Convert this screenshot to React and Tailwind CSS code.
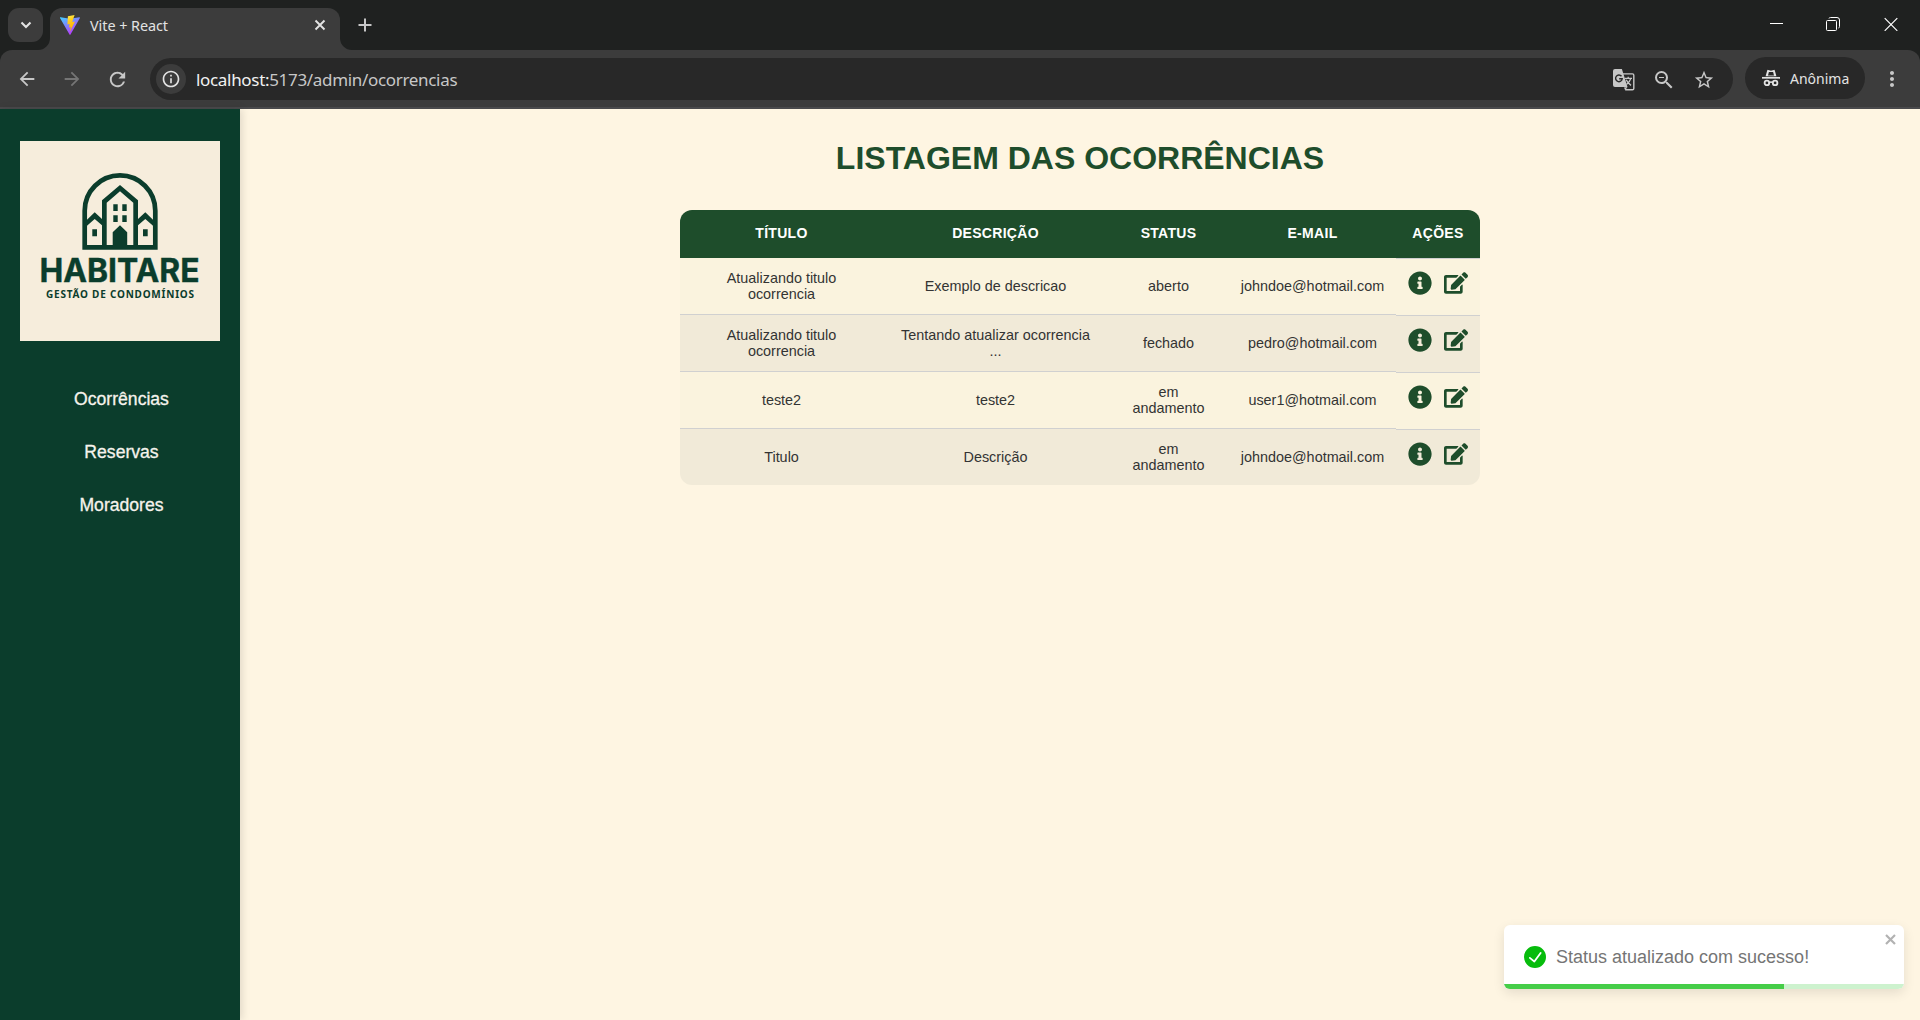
import React from "react";
import { FaEdit, FaInfoCircle } from "react-icons/fa";
import {
  MdArrowBack,
  MdArrowForward,
  MdRefresh,
  MdInfoOutline,
  MdZoomOut,
  MdStarBorder,
  MdMoreVert,
} from "react-icons/md";

const rows = [
  { titulo: ["Atualizando titulo", "ocorrencia"], descricao: ["Exemplo de descricao"], status: ["aberto"], email: "johndoe@hotmail.com" },
  { titulo: ["Atualizando titulo", "ocorrencia"], descricao: ["Tentando atualizar ocorrencia", "..."], status: ["fechado"], email: "pedro@hotmail.com" },
  { titulo: ["teste2"], descricao: ["teste2"], status: ["em", "andamento"], email: "user1@hotmail.com" },
  { titulo: ["Titulo"], descricao: ["Descrição"], status: ["em", "andamento"], email: "johndoe@hotmail.com" },
];

function ViteIcon() {
  return (
    <svg className="h-5 w-5 shrink-0" viewBox="0 0 20 20">
      <defs>
        <linearGradient id="vite-v" x1="0" y1="0" x2="0.6" y2="1">
          <stop offset="0" stopColor="#41d1ff" />
          <stop offset="1" stopColor="#bd34fe" />
        </linearGradient>
        <linearGradient id="vite-bolt" x1="0.4" y1="0" x2="0.6" y2="1">
          <stop offset="0" stopColor="#ffea45" />
          <stop offset="0.3" stopColor="#ffcb1c" />
          <stop offset="1" stopColor="#ffa800" />
        </linearGradient>
      </defs>
      <path d="M19.9 3 10.5 19.6a.6.6 0 0 1-1 0L0 3a.6.6 0 0 1 .6-.8l9.4 1.6 9.3-1.6a.6.6 0 0 1 .6.8Z" fill="url(#vite-v)" />
      <path d="M14.600 0 7.900 1.300 7.400 9.500 9.600 9 9 12.600l1.800-.5-1 4.900 5.200-10.500-2.800.5L14.600 0Z" fill="url(#vite-bolt)" />
    </svg>
  );
}

function IncognitoIcon() {
  return (
    <svg className="h-[18px] w-[18px]" viewBox="0 0 18 18" fill="none" stroke="#e3e3e3">
      <path d="M3.600 7.200 5.200 1.500q.2-.8 1-.6l2.800.8 2.800-.8q.8-.2 1 .6l1.600 5.700Z" fill="#e3e3e3" stroke="none" />
      <path d="M6 6.500 6.900 3h4.200l.9 3.500Z" fill="#282828" stroke="none" />
      <path d="M0 8.800h18" strokeWidth="1.700" />
      <circle cx="4.900" cy="13.900" r="2.300" strokeWidth="1.800" />
      <circle cx="13.100" cy="13.900" r="2.300" strokeWidth="1.800" />
      <path d="M7 13.600q2-1.200 4 0" strokeWidth="1.600" />
    </svg>
  );
}

function TranslateIcon() {
  return (
    <svg className="h-[22px] w-[22px]" viewBox="0 0 22 22" fill="none">
      <path d="M10 4.900h9.500q1.300 0 1.300 1.300v13.200q0 1.300-1.300 1.300h-7.300" stroke="#c7c7c7" strokeWidth="1.400" />
      <path d="M2 0h6.900l5.600 18H2q-2 0-2-2V2q0-2 2-2Z" fill="#c7c7c7" />
      <path d="m11 18.500 3.500-.5-2.300 3.200Z" fill="#c7c7c7" />
      <path d="M8.500 7.300A3.300 3.300 0 1 0 9.200 9.700H6.200" stroke="#282828" strokeWidth="1.400" />
      <path d="M11.700 9.300h7.300M15.200 7.800v1.500M17.800 9.300q-1 3.700-4.300 6.200M13.200 10.700q1.300 3.200 4.800 5.700" stroke="#c7c7c7" strokeWidth="1.300" />
    </svg>
  );
}

function TabStrip() {
  return (
    <div className="flex h-[50px] bg-[#1f2120]">
      <div className="mt-2 ml-2 flex h-[34px] w-[35px] items-center justify-center rounded-[11px] bg-[#3c3c3c]">
        <svg className="h-3 w-3" viewBox="0 0 12 12" fill="none" stroke="#e3e3e3" strokeWidth="2.100">
          <path d="m1.500 3.500 4.500 4.500 4.500-4.500" />
        </svg>
      </div>
      <svg className="mt-[38px] -ml-[5px] h-3 w-3" viewBox="0 0 12 12">
        <path d="M12 0v12H0A12 12 0 0 0 12 0Z" fill="#3c3c3c" />
      </svg>
      <div className="mt-2 flex h-[42px] w-[290px] items-start rounded-t-xl bg-[#3c3c3c] pt-[7px] pl-[10px]">
        <ViteIcon />
        <span className="ml-[10px] w-[214px] pt-px font-['Noto_Sans'] text-[14.400px] leading-5 tracking-[-0.05px] text-[#e3e3e3]">Vite + React</span>
        <svg className="mt-1 ml-[10px] h-3 w-3" viewBox="0 0 12 12" stroke="#e3e3e3" strokeWidth="1.900">
          <path d="m1.500 1.500 9 9m0-9-9 9" />
        </svg>
      </div>
      <svg className="mt-[38px] h-3 w-3" viewBox="0 0 12 12">
        <path d="M0 0v12h12A12 12 0 0 1 0 0Z" fill="#3c3c3c" />
      </svg>
      <svg className="mt-[18px] ml-[6px] h-[14px] w-[14px]" viewBox="0 0 14 14" stroke="#c7c7c7" strokeWidth="2">
        <path d="M.500 7h13M7 .500v13" />
      </svg>
      <div className="mt-[17px] mr-[22px] ml-auto flex h-[14px] items-start">
        <div className="mt-[6px] h-px w-[13px] bg-white" />
        <svg className="ml-[43px] h-[14px] w-[14px]" viewBox="0 0 14 14" fill="none" stroke="#fff">
          <rect x="0.500" y="3.500" width="10" height="10" rx="1" />
          <path d="M3 1.500q.2-1 1.500-1H11a2.500 2.500 0 0 1 2.500 2.500v6.500q0 1.300-1 1.500" />
        </svg>
        <svg className="ml-[44px] h-[14px] w-[14px]" viewBox="0 0 14 14" stroke="#fff" strokeWidth="1.200">
          <path d="m.700 1.200 12.600 12.600m0-12.600L.700 13.800" />
        </svg>
      </div>
    </div>
  );
}

function Toolbar() {
  return (
    <div className="bg-[#1f2120]">
      <div className="flex h-[59px] items-start rounded-t-xl border-b-2 border-[#4a4a4c] bg-[#3c3c3c] pt-2 font-['Noto_Sans']">
        <div className="mt-[10px] ml-[16px] flex text-[#c7c7c7]">
          <MdArrowBack size={22} />
          <MdArrowForward size={22} className="ml-[23px] text-[#757575]" />
          <MdRefresh size={23} className="ml-[23px]" />
        </div>
        <div className="ml-[21px] flex h-[42px] w-[1583px] items-center rounded-full bg-[#282828] pl-[6px]">
          <div className="flex h-[30px] w-[30px] items-center justify-center rounded-full bg-[#3c3c3c]">
            <MdInfoOutline size={20} color="#e3e3e3" />
          </div>
          <div className="ml-[10px] pt-px text-[17px] leading-6 tracking-[-0.32px] whitespace-nowrap text-[#c7c7c7]">
            <span className="text-[#f1f1f1]">localhost:</span>5173/admin/ocorrencias
          </div>
          <div className="mr-[18px] ml-auto flex items-center pt-px text-[#c7c7c7]">
            <TranslateIcon />
            <MdZoomOut size={24} className="ml-[17px]" />
            <MdStarBorder size={22} className="ml-[17px]" />
          </div>
        </div>
        <div className="-mt-px ml-3 flex h-[42px] w-[120px] items-center rounded-full bg-[#282828] pl-[17px]">
          <IncognitoIcon />
          <span className="ml-[10px] text-[14px] text-[#e3e3e3]">Anônima</span>
        </div>
        <MdMoreVert size={24} color="#c7c7c7" className="mt-[9px] ml-[15px]" />
      </div>
    </div>
  );
}

function Logo() {
  return (
    <svg className="h-[200px] w-[200px] bg-[#f6eddc]" viewBox="0 0 200 200" fill="#0b3d2c">
      <path d="M64.700 106.400V69.700a35.300 35.300 0 0 1 70.600 0v36.700Z" fill="none" stroke="#0b3d2c" strokeWidth="4.700" />
      <path d="M82 104.500V59.300L100 44l18 15.300v45.200h-4.700V61.700L100 50.300 86.700 61.700v42.800Z" />
      <path d="m67 78.700 7.700-7.400L82 78v6.300L74.700 78 67 84.700ZM133 78.700l-7.700-7.400L118 78v6.300l7.300-6.300 7.700 6.700Z" />
      <path d="M93.300 63.300h4.400V70h-4.400ZM102.300 63.300h4.400V70h-4.400ZM93.300 74.300h4.400V81h-4.400ZM102.300 74.300h4.400V81h-4.400ZM72.300 88.300H77v7h-4.700ZM123 88.300h4.700v7H123ZM92.700 106V91.300l7.300-7 7.200 7V106Z" />
      <text x="19.500" y="140.800" fontFamily="Inter, sans-serif" fontWeight="700" fontSize="32" stroke="#0b3d2c" strokeWidth="0.400" textLength="160" lengthAdjust="spacingAndGlyphs">HABITARE</text>
      <text x="26" y="156.800" fontFamily="'Noto Sans', sans-serif" fontWeight="700" fontSize="10" textLength="148" lengthAdjust="spacing">GESTÃO DE CONDOMÍNIOS</text>
    </svg>
  );
}

function Sidebar() {
  return (
    <aside className="relative w-60 shrink-0 bg-[#0b3d2c] px-5 pt-8 shadow-[2px_0_8px_rgba(0,0,0,0.12)]">
      <Logo />
      <nav className="mt-[48px] flex flex-col items-center gap-[33px] pl-[3px] text-[17.600px] leading-5 text-[#f6f3ec] antialiased [-webkit-text-stroke:0.300px_#f6f3ec]">
        <a>Ocorrências</a>
        <a>Reservas</a>
        <a>Moradores</a>
      </nav>
    </aside>
  );
}

function Lines({ lines }) {
  return (
    <div className="flex flex-col items-center justify-center border-b border-[#d0d0d0] pb-px group-last:border-b-0 group-last:pb-0">
      {lines.map((line) => (
        <span key={line}>{line}</span>
      ))}
    </div>
  );
}

function Table() {
  return (
    <div className="mx-auto w-[800px] overflow-hidden rounded-xl text-[14.400px] leading-4 text-[#333]">
      <div className="grid h-12 grid-cols-[203px_225px_121px_167px_84px] items-center bg-[#1e4d2b] pb-[3px] text-center text-[14px] font-bold tracking-[0.300px] text-white">
        {["TÍTULO", "DESCRIÇÃO", "STATUS", "E-MAIL", "AÇÕES"].map((h) => (
          <div key={h}>{h}</div>
        ))}
      </div>
      {rows.map((row, i) => (
        <div
          key={i}
          className="group grid h-[57px] grid-cols-[203px_225px_121px_167px_84px] odd:bg-[#f1ead8] even:bg-[#faf3de] last:h-14"
        >
          <Lines lines={row.titulo} />
          <Lines lines={row.descricao} />
          <Lines lines={row.status} />
          <Lines lines={[row.email]} />
          <div className="flex items-start gap-3 border-t border-[#d0d0d0] pt-3 pl-3 text-[#1e4d2b]">
            <FaInfoCircle size={24} />
            <FaEdit size={24} />
          </div>
        </div>
      ))}
    </div>
  );
}

function Toast() {
  return (
    <div className="absolute right-4 bottom-[31px] flex h-16 w-[400px] flex-col overflow-hidden rounded-md bg-white shadow-[0_4px_12px_rgba(0,0,0,0.1)]">
      <div className="flex flex-1 items-start pl-5">
        <svg className="mt-[21px] h-[22px] w-[22px]" viewBox="0 0 24 24" fill="#07bc0c">
          <path d="M12 0a12 12 0 1012 12A12.014 12.014 0 0012 0zm6.927 8.200l-6.845 9.289a1.011 1.011 0 01-1.430.188l-4.888-3.908a1 1 0 111.250-1.562l4.076 3.261 6.227-8.451a1 1 0 111.610 1.183z" />
        </svg>
        <span className="mt-[21px] ml-[10px] text-[18px] leading-[22px] text-[#757575]">Status atualizado com sucesso!</span>
        <svg className="mt-[9px] mr-2 ml-auto h-[11px] w-[11px]" viewBox="0 0 11 11" stroke="#b2b2b2" strokeWidth="2.200">
          <path d="m1 1 9 9m0-9-9 9" />
        </svg>
      </div>
      <div className="h-[5px] bg-[#cdf2ce]">
        <div className="h-full w-[70%] bg-[#45cd48]" />
      </div>
    </div>
  );
}

export default function App() {
  return (
    <div className="flex h-[1020px] w-[1920px] flex-col overflow-hidden font-['Liberation_Sans',Arial,sans-serif]">
      <TabStrip />
      <Toolbar />
      <div className="relative flex flex-1 bg-[#fef5e2]">
        <Sidebar />
        <main className="flex-1 pt-[30px]">
          <h1 className="mb-[33px] text-center text-[32px] leading-[38px] font-bold text-[#1e4d2b]">LISTAGEM DAS OCORRÊNCIAS</h1>
          <Table />
        </main>
        <Toast />
      </div>
    </div>
  );
}
